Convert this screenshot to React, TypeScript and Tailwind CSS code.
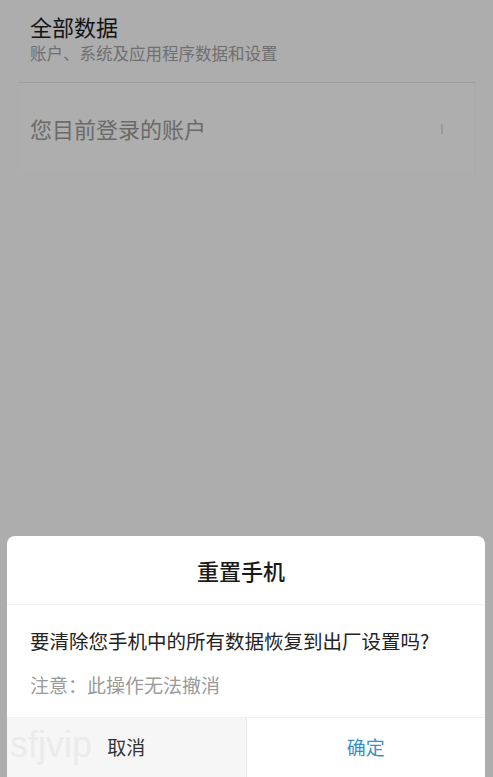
export default function App() {
    return (
        <div
            className="relative w-[493px] h-[777px] overflow-hidden bg-[#adadad] flex flex-col"
            style={{ fontFamily: '"Noto Sans CJK SC", "Noto Sans", sans-serif' }}
        >
            {/* settings list behind the dim overlay */}
            <div className="px-[30px] pt-[11px]">
                <div className="text-[22px] leading-[30px] text-[#141414]">全部数据</div>
                <div className="text-[16.5px] leading-[24px] text-[#6f6f6f]">账户、系统及应用程序数据和设置</div>
            </div>
            <div className="mx-[18px] mt-[17px] h-px bg-[#9f9f9f]" />
            <div className="mx-[18px] h-[91px] bg-[#aeaeae] border-r border-[#a8a8a8] flex items-center justify-between pl-[12px] pr-[31px]">
                <span className="text-[22px] text-[#6a6a6a]">您目前登录的账户</span>
                <span className="w-[2px] h-[10px] bg-[#9a9a9a]" />
            </div>

            {/* dialog */}
            <div className="mt-auto ml-[7px] mr-[8px] bg-white rounded-t-[8px] flex flex-col">
                <div className="h-[69px] flex items-center justify-center pr-[10px] border-b border-[#f2f2f2]">
                    <span className="text-[22px] font-medium text-[#1a1a1a]">重置手机</span>
                </div>
                <div className="h-[113px] px-[23px] pt-[21px] border-b border-[#efefef]">
                    <div className="text-[19.5px] leading-[30px] text-[#222]">要清除您手机中的所有数据恢复到出厂设置吗?</div>
                    <div className="mt-[14px] text-[19px] leading-[30px] text-[#9a9a9a]">注意：此操作无法撤消</div>
                </div>
                <div className="h-[59px] flex">
                    <button className="relative flex-1 bg-[#f6f6f6] border-r border-[#e6e6e6] flex items-center justify-center overflow-hidden">
                        <span
                            className="absolute left-[3px] top-[0px] text-[36px] text-[#ebebeb]"
                            style={{ fontFamily: '"Liberation Sans", sans-serif' }}
                        >
                            sfjvip
                        </span>
                        <span className="relative text-[19px] text-[#333]">取消</span>
                    </button>
                    <button className="flex-1 bg-white flex items-center justify-center">
                        <span className="text-[19px] text-[#3b8fc2]">确定</span>
                    </button>
                </div>
            </div>
        </div>
    )
}
